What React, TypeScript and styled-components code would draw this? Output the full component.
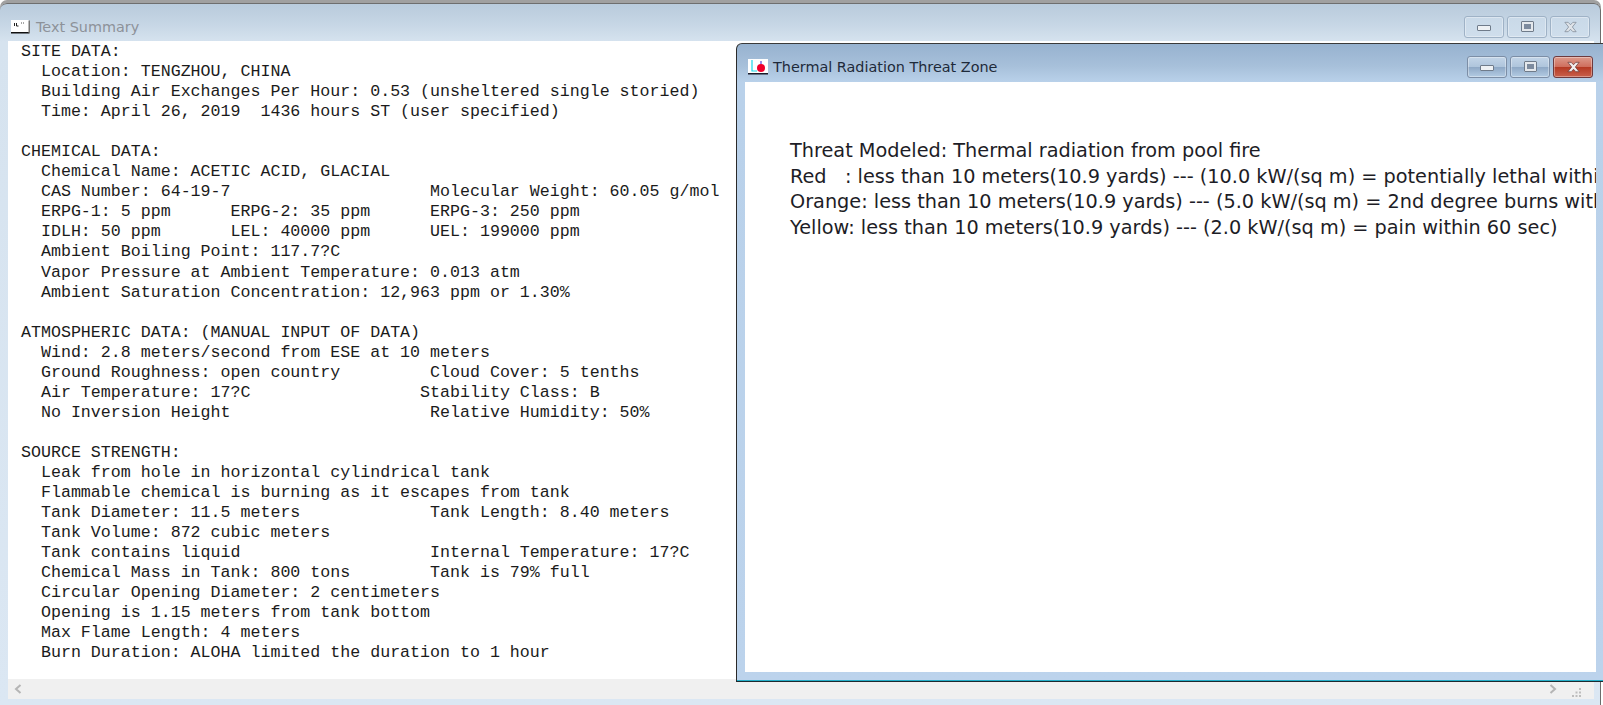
import React, { FC } from "react";
import styled, { createGlobalStyle } from "styled-components";

const GlobalStyle = createGlobalStyle`
  html, body {
    margin: 0;
    padding: 0;
    background: #fff;
  }
`;

const summary = `SITE DATA:
  Location: TENGZHOU, CHINA
  Building Air Exchanges Per Hour: 0.53 (unsheltered single storied)
  Time: April 26, 2019  1436 hours ST (user specified)

CHEMICAL DATA:
  Chemical Name: ACETIC ACID, GLACIAL
  CAS Number: 64-19-7                    Molecular Weight: 60.05 g/mol
  ERPG-1: 5 ppm      ERPG-2: 35 ppm      ERPG-3: 250 ppm
  IDLH: 50 ppm       LEL: 40000 ppm      UEL: 199000 ppm
  Ambient Boiling Point: 117.7?C
  Vapor Pressure at Ambient Temperature: 0.013 atm
  Ambient Saturation Concentration: 12,963 ppm or 1.30%

ATMOSPHERIC DATA: (MANUAL INPUT OF DATA)
  Wind: 2.8 meters/second from ESE at 10 meters
  Ground Roughness: open country         Cloud Cover: 5 tenths
  Air Temperature: 17?C                 Stability Class: B
  No Inversion Height                    Relative Humidity: 50%

SOURCE STRENGTH:
  Leak from hole in horizontal cylindrical tank
  Flammable chemical is burning as it escapes from tank
  Tank Diameter: 11.5 meters             Tank Length: 8.40 meters
  Tank Volume: 872 cubic meters
  Tank contains liquid                   Internal Temperature: 17?C
  Chemical Mass in Tank: 800 tons        Tank is 79% full
  Circular Opening Diameter: 2 centimeters
  Opening is 1.15 meters from tank bottom
  Max Flame Length: 4 meters
  Burn Duration: ALOHA limited the duration to 1 hour`;

const threatLines = [
  "Threat Modeled: Thermal radiation from pool fire",
  "Red   : less than 10 meters(10.9 yards) --- (10.0 kW/(sq m) = potentially lethal within 60 sec)",
  "Orange: less than 10 meters(10.9 yards) --- (5.0 kW/(sq m) = 2nd degree burns within 60 sec)",
  "Yellow: less than 10 meters(10.9 yards) --- (2.0 kW/(sq m) = pain within 60 sec)",
];

const Desktop = styled.div`
  position: relative;
  width: 1603px;
  height: 705px;
  overflow: hidden;
  background: #fff;
  padding-top: 3px;
  box-sizing: border-box;
  font-family: "DejaVu Sans", sans-serif;
`;

const SummaryWindow = styled.section`
  width: 1601px;
  height: 702px;
  box-sizing: border-box;
  display: flex;
  flex-direction: column;
  border-radius: 7px 7px 0 0;
  border-top: 1px solid #6e6e6e;
  border-right: 1px solid #6c6c6c;
  background: linear-gradient(180deg, #b9cbdc 0, #c6d6e5 20px, #d6e3ef 38px, #dbe7f3 100%);
  box-shadow: 0 -3px 0 #a0a0a0;
`;

const TitleBar = styled.header<{ $height: number; $top: number }>`
  height: ${(p) => p.$height}px;
  flex: none;
  display: flex;
  align-items: center;
  padding: ${(p) => p.$top}px 10px 0 11px;
  box-sizing: border-box;
`;

const Title = styled.span<{ $active?: boolean }>`
  margin-left: ${(p) => (p.$active ? 5 : 6)}px;
  font-size: 14.4px;
  color: ${(p) => (p.$active ? "#1e2a3a" : "#8d9299")};
  flex: 1;
  white-space: nowrap;
`;

const WindowControls = styled.div`
  display: flex;
  gap: 3px;
`;

const ControlButton = styled.div<{ $kind: "idle" | "active" | "close" }>`
  width: 40px;
  height: 22px;
  box-sizing: border-box;
  border-radius: 3px;
  display: flex;
  align-items: center;
  justify-content: center;
  border: 1px solid
    ${(p) => (p.$kind === "close" ? "#6e3a3e" : p.$kind === "active" ? "#7c8ea6" : "#9fb2c6")};
  box-shadow: inset 0 0 0 1px rgba(255, 255, 255, 0.35);
  background: ${(p) =>
    p.$kind === "close"
      ? "linear-gradient(180deg, #dd9a8c 0, #cf6f5e 48%, #b53a24 52%, #c9604c 100%)"
      : p.$kind === "active"
      ? "linear-gradient(180deg, #c3d5e8 0, #afc5dc 48%, #8fa9c6 52%, #b3cbe3 100%)"
      : "linear-gradient(180deg, #c9d9e8 0, #cfdeec 100%)"};
`;

const MinimizeGlyph = styled.span`
  width: 14px;
  height: 6px;
  box-sizing: border-box;
  border: 1px solid #6f7b8a;
  border-radius: 1px;
  background: #eef1f4;
  margin-top: 3px;
`;

const MaximizeGlyph = styled.span`
  width: 13px;
  height: 11px;
  box-sizing: border-box;
  border: 3px solid #e4e8ec;
  outline: 1px solid #6f7b8a;
  outline-offset: -1px;
  background: #7d8b9e;
  border-radius: 1px;
  margin-top: -1px;
`;

const CloseIcon: FC<{ faded?: boolean }> = ({ faded }) => (
  <svg width="15" height="12" viewBox="0 0 16 12">
    <path
      d="M2 1h3.5L8 3.6 10.5 1H14l-4 5 4 5h-3.5L8 8.4 5.5 11H2l4-5z"
      fill={faded ? "#dfe3e8" : "#f1eeee"}
      stroke={faded ? "#7e8895" : "#6a3a38"}
      strokeWidth="0.8"
    />
  </svg>
);

const SummaryIcon: FC = () => (
  <svg width="19" height="14" viewBox="0 0 19 14">
    <rect x="0" y="0" width="18" height="12" fill="#fff" />
    <path d="M3.5 3v3M5.5 3v3H7.5M10 3h.8M12 3h.8" stroke="#222" strokeWidth="1" fill="none" />
    <rect x="0" y="12" width="18" height="1.5" fill="#111" />
    <rect x="17.5" y="0.5" width="1.5" height="13" fill="#777" />
  </svg>
);

const ThreatIcon: FC = () => (
  <svg width="20" height="16" viewBox="0 0 20 16">
    <rect x="0" y="0" width="20" height="14" fill="#fff" />
    <path d="M4 1V12H9" stroke="#19d7e8" strokeWidth="1.2" fill="none" />
    <path d="M13 2v4" stroke="#5a3fd8" strokeWidth="1.2" />
    <circle cx="13" cy="9" r="4" fill="#f0002c" />
    <rect x="0" y="14" width="20" height="1.5" fill="#1b1b2a" />
  </svg>
);

const SummaryBody = styled.div`
  flex: 1;
  min-height: 0;
  margin: 0 6px 0 8px;
  background: #fff;
  overflow: hidden;
`;

const ReportText = styled.pre`
  margin: 0;
  padding: 1px 0 0 13px;
  font-family: "Liberation Mono", monospace;
  font-size: 16.64px;
  line-height: 20.04px;
  color: #1b1b1b;
`;

const ScrollBar = styled.div`
  flex: none;
  height: 20px;
  margin: 0 6px 6px 8px;
  background: #f0f0f0;
  display: flex;
  align-items: center;
  justify-content: space-between;
  padding: 0 12px 0 6px;
`;

const Arrow = styled.svg`
  width: 8px;
  height: 10px;
`;

const ArrowGroup = styled.div`
  display: flex;
  align-items: center;
  gap: 14px;
`;

const Grip = styled.svg`
  width: 11px;
  height: 11px;
  margin-top: 6px;
`;

const ThreatWindow = styled.section`
  position: absolute;
  left: 736px;
  top: 43px;
  width: 867px;
  height: 639px;
  box-sizing: border-box;
  display: flex;
  flex-direction: column;
  border-radius: 6px 0 0 0;
  border-top: 1px solid #3a3a3a;
  border-left: 1px solid #2a2a2a;
  border-bottom: 1px solid #1c2a30;
  box-shadow: inset 0 -1px 0 #25aec8;
  background: linear-gradient(180deg, #97b2cf 0, #a7c0da 22px, #b9d1ea 38px, #bcd3ec 100%);
`;

const ThreatBody = styled.div`
  flex: 1;
  min-height: 0;
  margin: 0 7px 9px 8px;
  padding: 56px 0 0 45px;
  background: #fff;
  overflow: hidden;
`;

const ThreatLine = styled.div`
  font-family: "DejaVu Sans", sans-serif;
  font-size: 19.28px;
  line-height: 25.5px;
  white-space: pre;
  color: #1d1d26;
`;

const App: FC = () => (
  <Desktop>
    <GlobalStyle />
    <SummaryWindow>
      <TitleBar $height={37} $top={8}>
        <SummaryIcon />
        <Title>Text Summary</Title>
        <WindowControls>
          <ControlButton $kind="idle">
            <MinimizeGlyph />
          </ControlButton>
          <ControlButton $kind="idle">
            <MaximizeGlyph />
          </ControlButton>
          <ControlButton $kind="idle">
            <CloseIcon faded />
          </ControlButton>
        </WindowControls>
      </TitleBar>
      <SummaryBody>
        <ReportText>{summary}</ReportText>
      </SummaryBody>
      <ScrollBar>
        <Arrow viewBox="0 0 8 10">
          <path d="M6.5 1L2 5l4.5 4" stroke="#b5b5b5" strokeWidth="2" fill="none" />
        </Arrow>
        <ArrowGroup>
          <Arrow viewBox="0 0 8 10">
            <path d="M1.5 1L6 5 1.5 9" stroke="#b5b5b5" strokeWidth="2" fill="none" />
          </Arrow>
          <Grip viewBox="0 0 11 11">
            <path d="M8 1h2v2H8zM4.5 4.5h2v2h-2zM8 4.5h2v2H8zM1 8h2v2H1zM4.5 8h2v2h-2zM8 8h2v2H8z" fill="#bdbdbd" />
          </Grip>
        </ArrowGroup>
      </ScrollBar>
    </SummaryWindow>
    <ThreatWindow>
      <TitleBar $height={38} $top={7}>
        <ThreatIcon />
        <Title $active>Thermal Radiation Threat Zone</Title>
        <WindowControls>
          <ControlButton $kind="active">
            <MinimizeGlyph />
          </ControlButton>
          <ControlButton $kind="active">
            <MaximizeGlyph />
          </ControlButton>
          <ControlButton $kind="close">
            <CloseIcon />
          </ControlButton>
        </WindowControls>
      </TitleBar>
      <ThreatBody>
        {threatLines.map((line) => (
          <ThreatLine key={line}>{line}</ThreatLine>
        ))}
      </ThreatBody>
    </ThreatWindow>
  </Desktop>
);

export default App;
